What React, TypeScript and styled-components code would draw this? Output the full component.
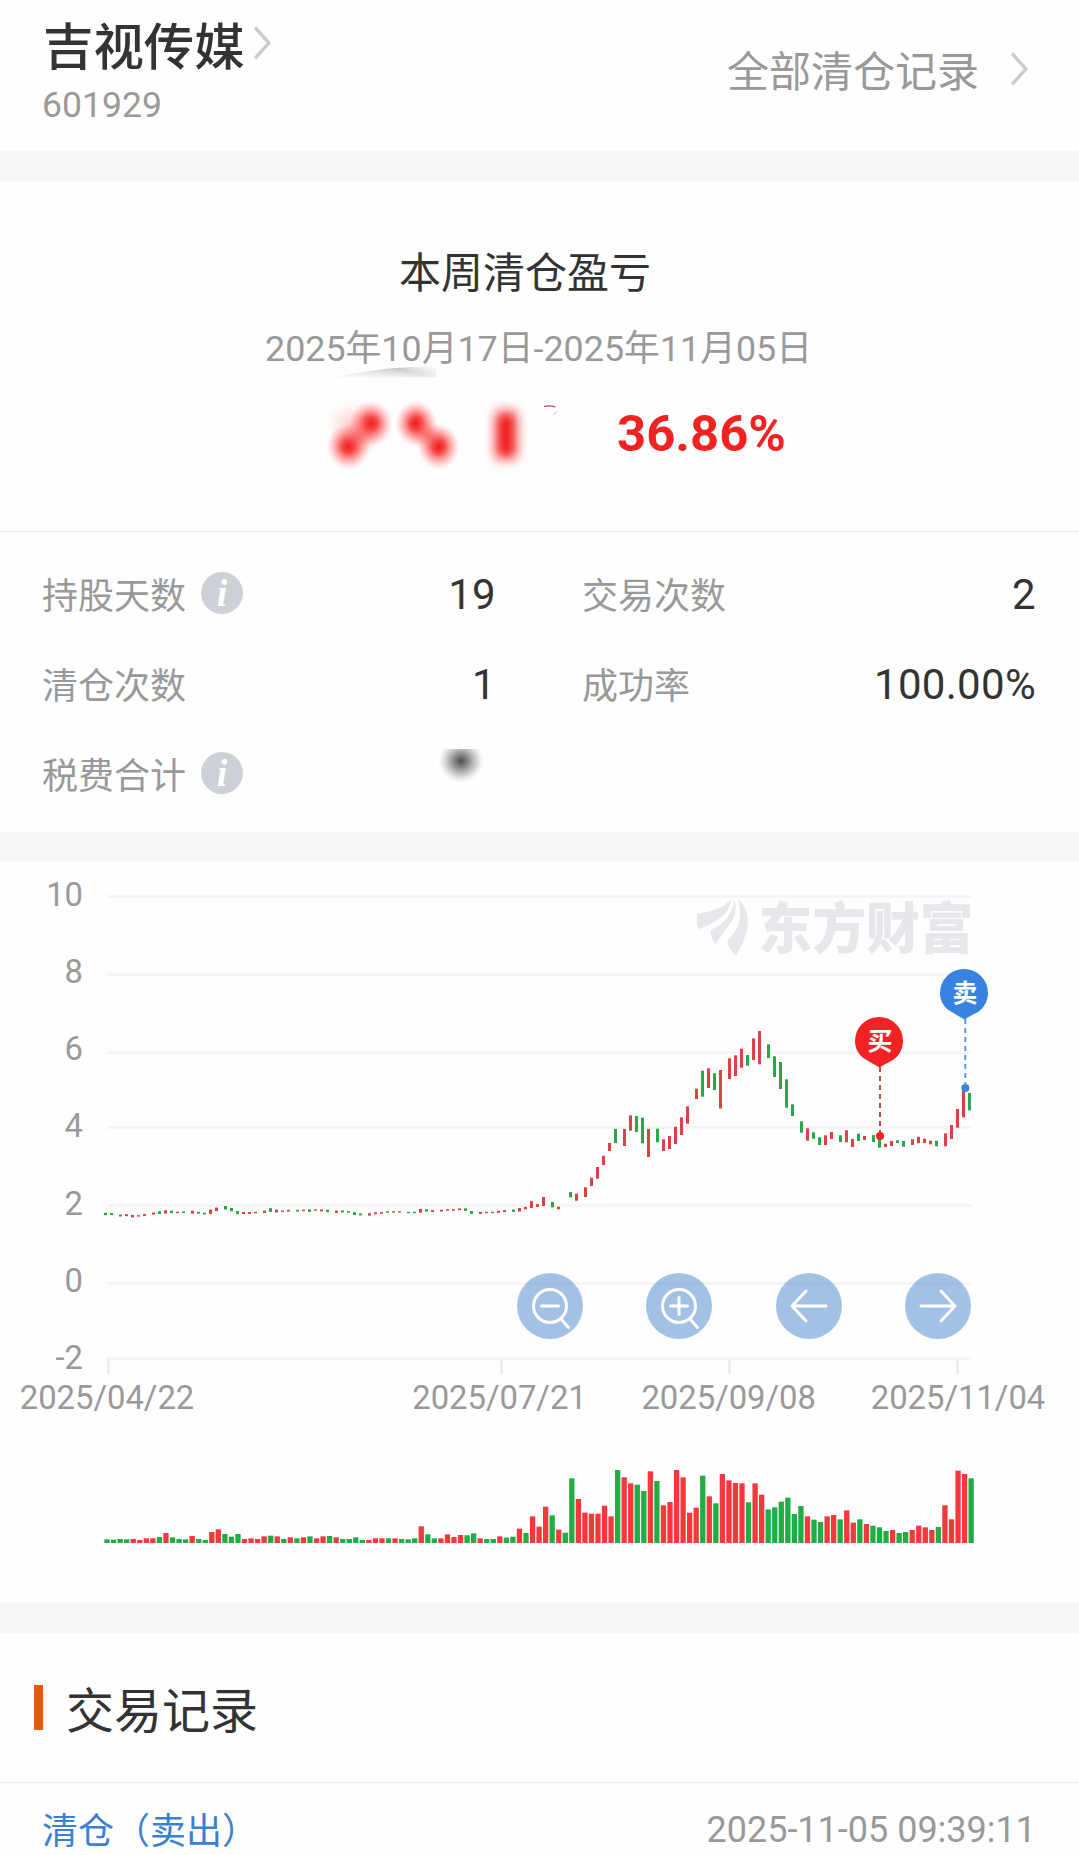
import React from 'react';
import styled, { createGlobalStyle } from 'styled-components';

const GlobalStyle = createGlobalStyle`
  *, *::before, *::after { box-sizing: border-box; }
  html, body { margin: 0; padding: 0; background: #fff; }
  body {
    font-family: Roboto, 'Noto Sans CJK SC', sans-serif;
    color: #333;
    overflow: hidden;
  }
`;

const Page = styled.div`
  width: 1079px;
  height: 1855px;
  overflow: hidden;
  background: #fefefe;
  display: flex;
  flex-direction: column;
`;

const Band = styled.div`
  height: 30px;
  flex: none;
  background: #f7f7f7;
`;

const Header = styled.header`
  height: 151px;
  flex: none;
  display: flex;
  justify-content: space-between;
  padding: 17px 51px 0 43px;
`;

const StockName = styled.div`
  display: flex;
  align-items: center;
  height: 62px;
  font-size: 50.4px;
  line-height: 62px;
  font-weight: 500;
  gap: 9px;
`;

const StockCode = styled.div`
  margin: -1px 0 0 -1px;
  font-size: 35.6px;
  line-height: 54px;
  color: #999;
`;

const AllRecords = styled.div`
  display: flex;
  align-items: center;
  gap: 32px;
  height: 112px;
  font-size: 42px;
  line-height: 60px;
  color: #999;
`;

const Chevron = styled.svg<{ $lift?: number }>`
  display: block;
  width: 17px;
  height: 34px;
  margin-bottom: ${(p) => p.$lift ?? 0}px;
  fill: none;
  stroke: #ccc;
  stroke-width: 3.4;
`;

const Summary = styled.section`
  height: 351px;
  flex: none;
  display: flex;
  flex-direction: column;
  border-bottom: 1px solid #ebebeb;
  padding-top: 63px;
`;

const SummaryTitle = styled.h1`
  margin: 0;
  padding-left: 399px;
  font-size: 42px;
  line-height: 60px;
  font-weight: 400;
`;

const SummaryPeriod = styled.div`
  margin-top: 21px;
  padding-left: 265px;
  font-size: 35.85px;
  line-height: 48px;
  color: #999;
`;

const ResultRow = styled.div`
  display: flex;
  align-items: flex-start;
  margin-top: -8px;
  padding-left: 320px;
`;

const BlurredAmount = styled.svg`
  display: block;
  width: 250px;
  height: 110px;
`;

const Percent = styled.div`
  margin: 39px 0 0 47px;
  font-size: 50.8px;
  line-height: 60px;
  font-weight: 700;
  color: #f12222;
`;

const Stats = styled.section`
  height: 300px;
  flex: none;
  display: grid;
  grid-template-columns: 454px 454px;
  grid-template-rows: repeat(3, 90px);
  column-gap: 86px;
  padding: 18px 43px 0 42px;
`;

const Stat = styled.div`
  display: flex;
  align-items: center;
  justify-content: space-between;
`;

const StatLabel = styled.div`
  display: flex;
  align-items: center;
  gap: 15px;
  padding-top: 3px;
  font-size: 36px;
  line-height: 48px;
  color: #999;
`;

const StatValue = styled.div`
  font-size: 42px;
  line-height: 54px;
  letter-spacing: 0.3px;
`;

const InfoBadge = styled.span`
  display: flex;
  justify-content: center;
  width: 42px;
  height: 42px;
  margin-top: -8px;
  border-radius: 50%;
  background: #cdd0d6;
  color: #fff;
  font: italic 700 38px/42px 'Liberation Serif', serif;
`;

const SmudgedValue = styled.svg`
  display: block;
  width: 44px;
  height: 34px;
  margin: 0 13px 18px 0;
`;

const ChartSection = styled.section`
  position: relative;
  height: 741px;
  flex: none;
`;

const ChartSvg = styled.svg`
  display: block;
  width: 1079px;
  height: 741px;
`;

const AxisText = styled.text`
  font-family: Roboto, sans-serif;
  font-size: 32.8px;
  fill: #999;
`;

const Watermark = styled.text`
  font-family: 'Noto Sans CJK SC', sans-serif;
  font-size: 55px;
  font-weight: 900;
  fill: #e6e6eb;
`;

const PinText = styled.text`
  font-family: 'Noto Sans CJK SC', sans-serif;
  font-size: 25px;
  font-weight: 700;
  fill: #fff;
`;

const Controls = styled.div`
  position: absolute;
  left: 517px;
  top: 411px;
  width: 454px;
  display: flex;
  justify-content: space-between;
`;

const RoundButton = styled.button`
  width: 66px;
  height: 66px;
  padding: 0;
  border: 0;
  border-radius: 50%;
  background: rgba(54, 120, 198, 0.45);

  svg {
    display: block;
    fill: none;
    stroke: #fff;
    stroke-width: 3;
    stroke-linecap: round;
    stroke-linejoin: round;
  }
`;

const RecordsHeader = styled.div`
  height: 150px;
  flex: none;
  display: flex;
  align-items: center;
  gap: 23px;
  padding: 0 0 1px 34px;
  border-bottom: 1px solid #ebebeb;

  &::before {
    content: '';
    width: 9px;
    height: 45px;
    background: #e9590c;
  }
`;

const RecordsTitle = styled.h2`
  margin: 0;
  padding-top: 10px;
  font-size: 48px;
  font-weight: 400;
  line-height: 64px;
`;

const RecordRow = styled.div`
  height: 95px;
  flex: none;
  display: flex;
  justify-content: space-between;
  padding: 23px 43px 0 42px;
  font-size: 36px;
  line-height: 48px;
`;

const RecordType = styled.span`
  padding-top: 2px;
  color: #3a80d2;
`;

const RecordTime = styled.span`
  color: #999;
`;

const RED = '#da4244';
const GREEN = '#2ba64b';
const PITCH = 6.546;

const VOLUME_SERIES: number[] = [
  11, 10, 12, 11, 12, 9, 14, 14, 18, 30, 17, 12, 11, 21, 12, 9, 33, 41, 27, 19, 27, 12, 14, 12, 20, 22, 20, 12, 17, 14,
  17, 20, 14, 20, 21, 17, 12, 12, 17, 9, 9, 14, 14, 14, 14, 12, 11, 14, 50, 26, 14, 14, 26, 18, 24, 23, 29, 14, 12, 12,
  20, 16, 19, 43, 30, 80, 49, 109, 83, 40, 31, 194, 132, 91, 88, 88, 112, 80, 219, 197, 179, 175, 156, 215, 186, 113,
  123, 219, 197, 91, 106, 202, 140, 119, 207, 188, 180, 179, 122, 179, 145, 101, 107, 124, 136, 87, 111, 80, 70, 63,
  80, 84, 71, 98, 61, 71, 57, 52, 47, 36, 39, 30, 33, 39, 52, 47, 39, 48, 113, 71, 217, 207, 194,
];

/* One letter per trading day, ten days per group: r = up, g = down. */
const VOLUME_DIRECTION = [
  'ggggrrrrgr',
  'gggrggrrgg',
  'grrrrgrgrg',
  'rgrrgrgggg',
  'rrrgrgggrg',
  'grrrrggrgg',
  'rggrgrrrgr',
  'ggrrrrrrgr',
  'rggrgrrrrr',
  'rgrgrrrrgr',
  'rggggggrgg',
  'rrgrrgrggg',
  'rggrrrrgrr',
  'rrg',
].join('');

/* Flat stretch of the price line: direction, centre, body height. */
const FLAT: [string, number, number][] = [
  ['g', 1214, 2.4], ['g', 1214, 2], ['g', 1215.5, 2], ['r', 1215.2, 2], ['r', 1216.2, 2.4], ['r', 1215.9, 1.4],
  ['r', 1215.1, 2], ['r', 1213.6, 2], ['g', 1212.6, 2.8], ['r', 1211.9, 3.4], ['g', 1211.9, 2.4], ['r', 1212.5, 1.4],
  ['g', 1212.2, 1.6], ['r', 1212.2, 3], ['g', 1212.8, 1.8], ['g', 1213.6, 1.6], ['r', 1211.8, 4.4], ['r', 1209.3, 3.6],
  ['g', 1207.8, 3.6], ['g', 1209.6, 3.4], ['g', 1212.6, 3], ['r', 1213, 2], ['r', 1213, 1.8], ['r', 1212.6, 1.4],
  ['r', 1211.8, 2.4], ['g', 1210, 3.8], ['r', 1211.1, 2.8], ['r', 1211.2, 1.4], ['r', 1210.7, 1.8], ['g', 1210.7, 1.8],
  ['r', 1210.4, 1.6], ['g', 1210.7, 2.6], ['r', 1210.1, 1.4], ['r', 1210.4, 2], ['g', 1211, 2.4], ['r', 1211.8, 2.4],
  ['g', 1211.4, 2], ['g', 1211.8, 1.6], ['g', 1213.6, 2.8], ['g', 1214.4, 2], ['r', 1214.4, 2.4], ['r', 1213.3, 2],
  ['r', 1212.9, 1.6], ['g', 1211.9, 1.5], ['r', 1211.9, 1.5], ['r', 1211.9, 1.4], ['g', 1212.5, 1.4], ['g', 1212.5, 1.4],
  ['r', 1210.8, 3.8], ['g', 1210.4, 2.4], ['r', 1211.1, 2], ['r', 1210.7, 1.8], ['r', 1210, 1.5], ['r', 1210, 1.5],
  ['r', 1209.3, 1.8], ['g', 1209.6, 2.6], ['g', 1212.5, 3], ['r', 1213, 2], ['r', 1212.5, 1.4], ['g', 1212.5, 1.4],
  ['r', 1211.8, 2], ['r', 1211.1, 2], ['g', 1210.7, 2.4], ['r', 1209.8, 3.6], ['r', 1208.1, 2.4], ['r', 1204.6, 7],
  ['r', 1205.5, 2.8],
];

/* Moving stretch, from day 67: direction, top, bottom. */
const MOVES: ([string, number, number] | null)[] = [
  ['r', 1197, 1206], ['g', 1202, 1207.4], ['r', 1206.7, 1209.3], null, ['g', 1192, 1197.3], ['r', 1193.7, 1200.7],
  ['r', 1187.3, 1197], ['r', 1177.7, 1186], ['r', 1167, 1178.7], ['r', 1155.7, 1165], ['r', 1143, 1151],
  ['g', 1129, 1143], ['r', 1129, 1146], ['r', 1115.3, 1130.7], ['g', 1116, 1132], ['g', 1117.7, 1143.3],
  ['r', 1129, 1157], ['g', 1128.7, 1142.3], ['r', 1139.3, 1151], ['r', 1136, 1149], ['r', 1126.7, 1144],
  ['r', 1117.3, 1135], ['r', 1106.3, 1123.7], ['r', 1088.7, 1099], ['g', 1070.7, 1096.7], ['r', 1068.3, 1088],
  ['g', 1073.3, 1090], ['r', 1070, 1108.5], ['r', 1058.3, 1079], ['r', 1055.3, 1076], ['r', 1048.7, 1067.7],
  ['g', 1055, 1065.7], ['r', 1038.3, 1060], ['r', 1031, 1064.3], ['g', 1044.3, 1058], ['g', 1056.3, 1077],
  ['g', 1062, 1089], ['g', 1079.3, 1107.7], ['g', 1104.3, 1116], ['g', 1121.3, 1132.7], ['r', 1128.3, 1140.7],
  ['g', 1132.3, 1138.7], ['g', 1137.3, 1145], ['r', 1135.3, 1145], ['r', 1132, 1139], ['g', 1135.3, 1142],
  ['r', 1130.3, 1142.3], ['r', 1139, 1147], ['g', 1133.7, 1141], ['r', 1136, 1140], ['g', 1135, 1142],
  ['g', 1137.7, 1147.7], ['r', 1143.7, 1147], ['r', 1141, 1146], ['g', 1140.3, 1143], ['g', 1141, 1146.7],
  ['r', 1139.3, 1145], ['r', 1136.7, 1143.3], ['r', 1138.7, 1143], ['r', 1140.7, 1144.3], ['g', 1140.7, 1146.3],
  ['r', 1133.3, 1146.3], ['r', 1125, 1139], ['r', 1109, 1127.7], ['r', 1090, 1117.3], ['g', 1093, 1110.3],
];

const CHART_TOP = 862;
const candleX = (i: number) => 3 * Math.round((105.4 + PITCH * i + 0.42) / 3) - 1;

const candles = [
  ...FLAT.map(([c, mid, h]) => [c, mid - h / 2, mid + h / 2] as [string, number, number]),
  ...MOVES,
];

const GRID = [
  { y: 896.4, label: '10' },
  { y: 974.5, label: '8' },
  { y: 1052.4, label: '6' },
  { y: 1127.4, label: '4' },
  { y: 1205.4, label: '2' },
  { y: 1283.5, label: '0' },
  { y: 1358.6, label: '-2' },
];

const DATES = [
  { x: 108.5, cx: 107, label: '2025/04/22' },
  { x: 501.5, cx: 499.5, label: '2025/07/21' },
  { x: 729.5, cx: 728.7, label: '2025/09/08' },
  { x: 957.5, cx: 958, label: '2025/11/04' },
];

const Pin = ({ x, y, color, label }: { x: number; y: number; color: string; label: string }) => (
  <g>
    <path
      d={`M${x} ${y - 24}a24 24 0 0 1 24 24c0 8-4 15-10 19q-8 4-13.5 7.6q-8-4.600-14.500-8.600c-6-4-10-10-10-18a24 24 0 0 1 24-24z`}
      fill={color}
    />
    <PinText x={x + 1} y={y + 9} textAnchor="middle">
      {label}
    </PinText>
  </g>
);

const Chart = () => (
  <ChartSvg viewBox={`0 ${CHART_TOP} 1079 741`}>
    {GRID.map((g, i) => (
      <g key={g.label}>
        <rect x="107" y={Math.round(g.y - 1.5)} width="864" height="3" fill="#f5f5f5" />
        <AxisText x="83" y={905.8 + i * 77.2} textAnchor="end">
          {g.label}
        </AxisText>
      </g>
    ))}
    {DATES.map((d) => (
      <g key={d.label}>
        <rect x={d.x - 1.5} y="1359" width="3" height="15" fill="#ededed" />
        <AxisText x={d.cx} y="1409" textAnchor="middle">
          {d.label}
        </AxisText>
      </g>
    ))}
    <g transform="translate(660 870) scale(0.3333)" fill="#e6e6eb">
      <path d="M112 132C150 126 190 116 213 88C212 124 184 152 115 178C110 160 110 145 112 132z" />
      <path d="M222 88C234 112 224 146 205 168C194 182 180 200 167 223C155 206 150 190 153 180C190 164 218 138 222 88z" />
      <path d="M235 88C256 106 266 136 263 165C261 198 245 226 228 258C210 237 202 225 203 215C206 198 242 186 240 128C240 110 237 100 235 88z" />
    </g>
    <Watermark x="758.500" y="948" textLength="215" lengthAdjust="spacingAndGlyphs">
      东方财富
    </Watermark>
    {candles.map((c, i) =>
      c ? (
        <rect key={i} x={candleX(i)} y={c[1]} width="3" height={c[2] - c[1]} fill={c[0] === 'r' ? RED : GREEN} />
      ) : null,
    )}
    {VOLUME_SERIES.map((v, i) => (
      <rect
        key={i}
        x={104.4 + PITCH * i}
        y={1543 - v / 3}
        width="5.300"
        height={v / 3}
        fill={VOLUME_DIRECTION[i] === 'r' ? '#f23a3d' : '#22ac45'}
      />
    ))}
    <path d="M880 1067V1132" stroke="#c8494b" strokeWidth="2" strokeDasharray="5 4" />
    <circle cx="880" cy="1136" r="4" fill="#ee2326" />
    <path d="M965.300 1018V1085" stroke="#5b9be0" strokeWidth="2" strokeDasharray="5 4" strokeDashoffset="-1" />
    <circle cx="965.300" cy="1088" r="4" fill="#3a84df" />
    <Pin x={879} y={1041} color="#f12224" label="买" />
    <Pin x={964} y={993} color="#3883e0" label="卖" />
  </ChartSvg>
);

const ControlIcon = ({ d, lens }: { d: string; lens?: boolean }) => (
  <svg width="66" height="66" viewBox="0 0 66 66">
    {lens && <circle cx="33" cy="33" r="16.500" />}
    <path d={d} />
  </svg>
);

const Info = () => <InfoBadge>i</InfoBadge>;

export default function App() {
  return (
    <Page>
      <GlobalStyle />
      <Header>
        <div>
          <StockName>
            吉视传媒
            <Chevron viewBox="0 0 17 34" $lift={11}>
              <path d="M1 1.500L15 17L1 32.500" />
            </Chevron>
          </StockName>
          <StockCode>601929</StockCode>
        </div>
        <AllRecords>
          全部清仓记录
          <Chevron viewBox="0 0 17 34" $lift={8}>
            <path d="M1 1.500L15 17L1 32.500" />
          </Chevron>
        </AllRecords>
      </Header>
      <Band />
      <Summary>
        <SummaryTitle>本周清仓盈亏</SummaryTitle>
        <SummaryPeriod>2025年10月17日-2025年11月05日</SummaryPeriod>
        <ResultRow>
          <BlurredAmount viewBox="320 365 250 110">
            <defs>
              <radialGradient id="blob">
                <stop offset="0" stopColor="#f01414" />
                <stop offset="0.3" stopColor="#f22c2c" stopOpacity="0.85" />
                <stop offset="0.65" stopColor="#f55" stopOpacity="0.42" />
                <stop offset="1" stopColor="#f88" stopOpacity="0" />
              </radialGradient>
              <linearGradient id="shade" x1="0" x2="1" y1="0.4" y2="0">
                <stop offset="0" stopColor="#bbb" stopOpacity="0.3" />
                <stop offset="0.6" stopColor="#bbb" stopOpacity="0.8" />
                <stop offset="1" stopColor="#ddd" stopOpacity="0" />
              </linearGradient>
              <linearGradient id="fade" x1="0" x2="0" y1="0" y2="1">
                <stop offset="0.2" stopColor="#fefefe" stopOpacity="0" />
                <stop offset="1" stopColor="#fefefe" stopOpacity="0.75" />
              </linearGradient>
              <filter id="soften" x="-2" y="-1" width="5" height="3">
                <feGaussianBlur stdDeviation="6 6" />
              </filter>
            </defs>
            <path d="M334 377.500Q380 366.500 436 366V377.500z" fill="url(#shade)" />
            <rect x="330" y="366" width="110" height="12" fill="url(#fade)" />
            <path d="M485 370l9 7z" fill="#eee" />
            <ellipse cx="371" cy="423.500" rx="22" ry="23" fill="url(#blob)" />
            <ellipse cx="348.500" cy="446.500" rx="22" ry="23" fill="url(#blob)" />
            <ellipse cx="351" cy="425" rx="25" ry="25" fill="url(#blob)" opacity="0.18" />
            <ellipse cx="360" cy="436" rx="20" ry="20" fill="url(#blob)" opacity="0.35" />
            <ellipse cx="416" cy="423.500" rx="21" ry="23" fill="url(#blob)" />
            <ellipse cx="438.500" cy="446.500" rx="21" ry="23" fill="url(#blob)" />
            <ellipse cx="427" cy="435" rx="17" ry="17" fill="url(#blob)" opacity="0.4" />
            <rect x="496" y="412" width="20" height="46" fill="#f01414" filter="url(#soften)" />
            <path d="M544 406.500q5-1.500 11.500 0.500" stroke="#b84848" strokeWidth="1.300" fill="none" />
            <path d="M553 415l4-3.500" stroke="#e8b8b8" strokeWidth="1" fill="none" />
          </BlurredAmount>
          <Percent>36.86%</Percent>
        </ResultRow>
      </Summary>
      <Stats>
        <Stat>
          <StatLabel>
            持股天数
            <Info />
          </StatLabel>
          <StatValue>19</StatValue>
        </Stat>
        <Stat>
          <StatLabel>交易次数</StatLabel>
          <StatValue>2</StatValue>
        </Stat>
        <Stat>
          <StatLabel>清仓次数</StatLabel>
          <StatValue>1</StatValue>
        </Stat>
        <Stat>
          <StatLabel>成功率</StatLabel>
          <StatValue>100.00%</StatValue>
        </Stat>
        <Stat>
          <StatLabel>
            税费合计
            <Info />
          </StatLabel>
          <SmudgedValue viewBox="0 0 44 34">
            <defs>
              <radialGradient id="smudge">
                <stop offset="0" stopColor="#4a4a4a" />
                <stop offset="0.35" stopColor="#777" stopOpacity="0.8" />
                <stop offset="0.7" stopColor="#999" stopOpacity="0.4" />
                <stop offset="1" stopColor="#ccc" stopOpacity="0" />
              </radialGradient>
            </defs>
            <ellipse cx="22" cy="12" rx="23" ry="22" fill="url(#smudge)" />
          </SmudgedValue>
        </Stat>
      </Stats>
      <Band />
      <ChartSection>
        <Chart />
        <Controls>
          <RoundButton aria-label="缩小">
            <ControlIcon lens d="M24.500 33H41.500M44 46L51.500 54.500" />
          </RoundButton>
          <RoundButton aria-label="放大">
            <ControlIcon lens d="M24.500 33H41.500M33 24.500V41.500M44 46L51.500 54.500" />
          </RoundButton>
          <RoundButton aria-label="向左">
            <ControlIcon d="M50 33H16M30 18L16 33L30 48" />
          </RoundButton>
          <RoundButton aria-label="向右">
            <ControlIcon d="M16 33H50M36 18L50 33L36 48" />
          </RoundButton>
        </Controls>
      </ChartSection>
      <Band />
      <RecordsHeader>
        <RecordsTitle>交易记录</RecordsTitle>
      </RecordsHeader>
      <RecordRow>
        <RecordType>清仓（卖出）</RecordType>
        <RecordTime>2025-11-05 09:39:11</RecordTime>
      </RecordRow>
    </Page>
  );
}
